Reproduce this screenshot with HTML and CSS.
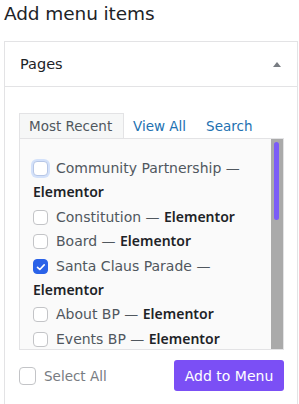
FILE: index.html
```html
<!DOCTYPE html>
<html>
<head>
<meta charset="utf-8">
<link rel="stylesheet" href="styles.css">
</head>
<body>
<h2 class="title">Add menu items</h2>
<div class="panel">
  <div class="panel-head">
    <span class="panel-title">Pages</span>
    <span class="arrow"></span>
  </div>
  <div class="panel-body">
    <div class="tabs">
      <span class="tab active">Most Recent</span>
      <span class="tab link">View All</span>
      <span class="tab link">Search</span>
    </div>
    <div class="list">
      <ul class="items">
        <li><span class="cb focus"></span><span class="name">Community Partnership —</span> <b>Elementor</b></li>
        <li><span class="cb"></span><span class="name">Constitution —</span> <b>Elementor</b></li>
        <li><span class="cb"></span><span class="name">Board —</span> <b>Elementor</b></li>
        <li><span class="cb checked"><svg viewBox="0 0 16 16" width="16" height="16"><path d="M4.5 8.3l2.3 2.2 4.4-4.6" fill="none" stroke="#fff" stroke-width="1.6" stroke-linecap="round" stroke-linejoin="round"/></svg></span><span class="name">Santa Claus Parade —</span> <b>Elementor</b></li>
        <li><span class="cb"></span><span class="name">About BP —</span> <b>Elementor</b></li>
        <li><span class="cb"></span><span class="name">Events BP —</span> <b>Elementor</b></li>
      </ul>
      <div class="scrollbar"><div class="thumb"></div></div>
    </div>
    <div class="actions">
      <label class="select-all"><span class="cb big"></span><span>Select All</span></label>
      <button class="btn">Add to Menu</button>
    </div>
  </div>
</div>
</body>
</html>
```
FILE: styles.css
```css
html, body {
  margin: 0;
  padding: 0;
  background: #fff;
  font-family: "DejaVu Sans", "Noto Sans", sans-serif;
  color: #1d2327;
  overflow: hidden;
}
.title {
  margin: 0;
  padding: 3px 0 0 4px;
  height: 41px;
  box-sizing: border-box;
  font-size: 18.5px;
  font-weight: 500;
  letter-spacing: -0.1px;
  color: #1d2327;
}
.panel {
  margin-left: 4px;
  width: 294px;
  box-sizing: border-box;
  border: 1px solid #e3e3e5;
  border-bottom: none;
  height: 363px;
}
.panel-head {
  display: flex;
  align-items: center;
  justify-content: space-between;
  padding: 0 16px 0 15px;
  box-sizing: border-box;
  height: 45px;
  border-bottom: 1px solid #e3e3e5;
}
.panel-title {
  font-size: 14.5px;
  color: #1d2327;
}
.arrow {
  width: 0;
  height: 0;
  border-left: 4px solid transparent;
  border-right: 4px solid transparent;
  border-bottom: 5px solid #787c82;
}
.panel-body {
  padding: 26px 13px 0 14px;
}
.tabs {
  display: flex;
  height: 25px;
  align-items: stretch;
  font-size: 13.5px;
}
.tab {
  display: flex;
  align-items: center;
}
.tab.active {
  width: 105px;
  box-sizing: border-box;
  padding-left: 9px;
  background: #f6f7f7;
  border: 1px solid #e3e3e5;
  border-bottom: none;
  color: #50575e;
}
.tab.link {
  color: #2271b1;
  margin-left: 9px;
  margin-right: 11px;
}
.list {
  display: flex;
  height: 212px;
  box-sizing: border-box;
  border: 1px solid #e3e3e5;
  background: #fafafa;
  overflow: hidden;
}
.items {
  flex: 1;
  list-style: none;
  margin: 0;
  padding: 17px 0 0 13px;
  font-size: 14px;
  line-height: 24px;
}
.items li {
  margin: 0 0 0.5px;
  color: #50575e;
}
.items b {
  color: #1d2327;
  font-family: "Noto Sans", sans-serif;
  font-weight: 600;
}
.cb {
  display: inline-block;
  width: 15px;
  height: 15px;
  box-sizing: border-box;
  border: 1px solid #c3c4c7;
  border-radius: 4px;
  background: #fff;
  vertical-align: -3px;
  margin-right: 8px;
}
.cb.focus {
  box-shadow: 0 0 0 2px #d3e1fa;
  border-color: #b6c6e6;
}
.cb.checked {
  background: #2a62e8;
  border-color: #2a62e8;
}
.cb.checked svg {
  display: block;
  margin: -1px;
}
.name {
  color: #50575e;
}
.scrollbar {
  width: 12px;
  background: #aaaaaa;
  padding: 3px 4px 0 3px;
  box-sizing: border-box;
}
.thumb {
  width: 5px;
  height: 78px;
  border-radius: 3px;
  background: #7b5cf6;
}
.actions {
  display: flex;
  justify-content: space-between;
  align-items: center;
  margin-top: 10px;
  width: 265px;
}
.select-all {
  display: flex;
  align-items: center;
  font-size: 13.5px;
  color: #787c82;
}
.cb.big {
  width: 17px;
  height: 18px;
  margin-right: 8px;
}
.btn {
  width: 110px;
  height: 31px;
  border: none;
  border-radius: 3px;
  background: #7b4ff5;
  color: #fff;
  font-family: "DejaVu Sans", sans-serif;
  font-size: 14px;
  font-weight: 500;
  padding: 0;
}
```
